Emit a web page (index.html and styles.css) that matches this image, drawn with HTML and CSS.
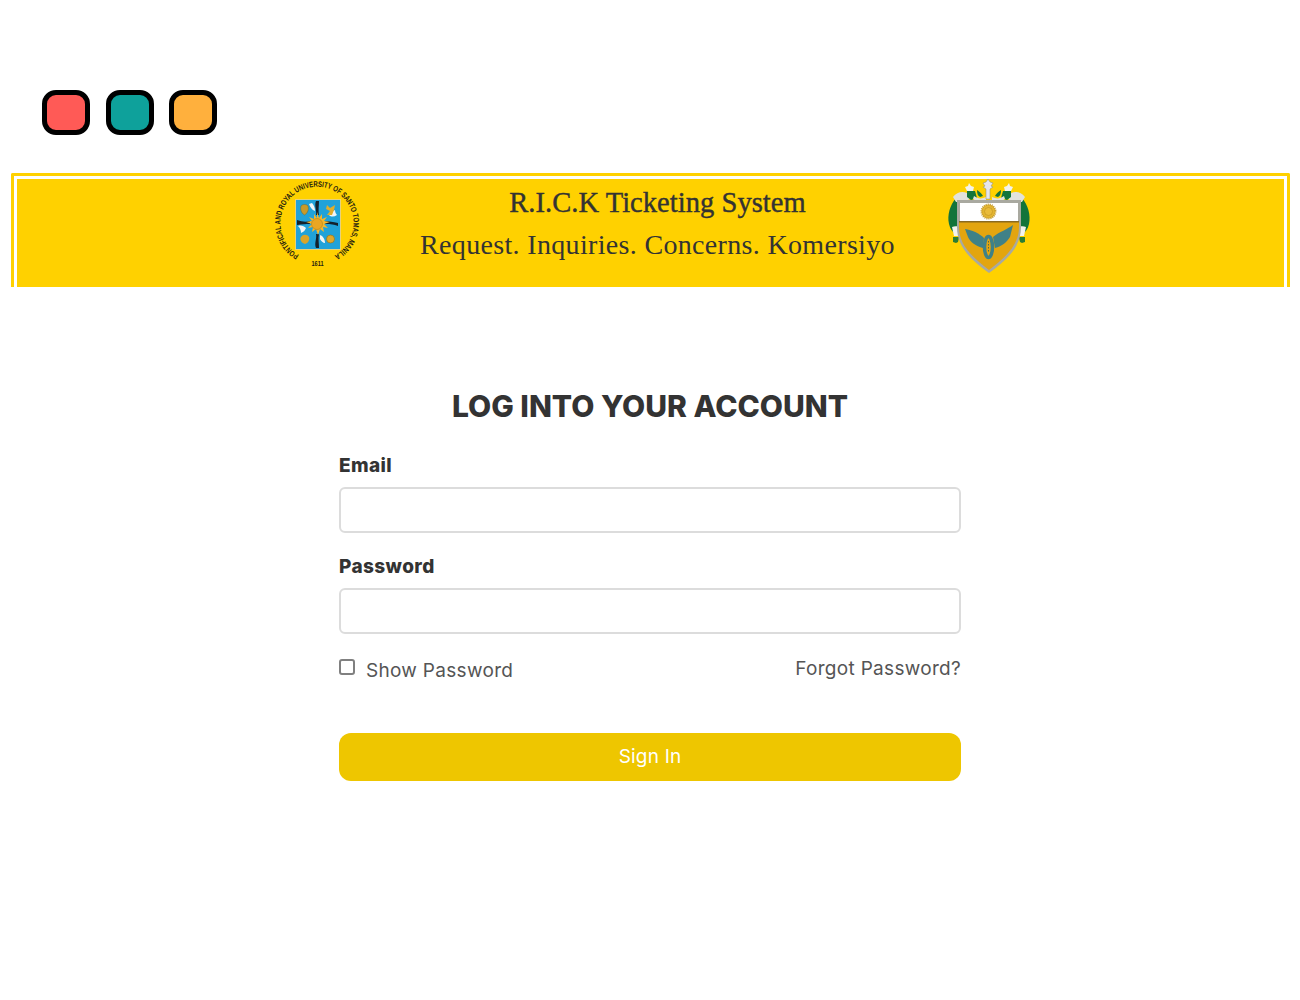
FILE: index.html
```html
<!DOCTYPE html>
<html lang="en">

<head>
    <meta charset="UTF-8">
    <meta name="viewport" content="width=device-width, initial-scale=1.0">
    <title>R.I.C.K Ticketing System</title>
    <link rel="stylesheet" href="styles.css">
</head>

<body>
    <div class="dots">
        <span class="dot red"></span>
        <span class="dot teal"></span>
        <span class="dot orange"></span>
    </div>

    <div class="banner">
        <div class="banner-inner">
            <svg class="seal" viewBox="0 0 88 90" aria-label="University seal">
                <defs>
                    <path id="ringTop" d="M25 76A36.500 36.500 0 1 1 61 76" />
                </defs>
                <text class="seal-ring"><textPath href="#ringTop" textLength="192" lengthAdjust="spacingAndGlyphs">PONTIFICAL AND ROYAL UNIVERSITY OF SANTO TOMAS, MANILA</textPath></text>
                <text class="seal-year" x="37.500" y="87" textLength="12" lengthAdjust="spacingAndGlyphs">1611</text>
                <rect x="21.500" y="20.500" width="45" height="50" fill="#20a2d9" stroke="#e8d27a" />
                <!-- cross arms -->
                <path d="M42 22c3 0 3 0 3 0 0 5-1 9 0 14h-3c1-5-2-9 0-14zM42 69h3c0-5-1-9 0-14h-3c1 5-2 9 0 14zM23 41c6 2 9 2 13 1v3c-4 0-8 0-13 1zM64 44v3c-6-2-9-2-13-2v-3c4 0 8 1 13 2z" fill="#14212c" />
                <path d="M38 24c2 2 3 5 3 8-3-1-5-4-6-7zM24 47c3-1 6 0 8 2-1 2-2 4-5 5 0-3-1-5-3-7zM63 36c-3 2-6 2-8 0 1-2 3-4 6-5 0 2 1 4 2 5zM46 56c3 1 5 4 5 8-2 0-4-2-5-4z" fill="#f1f5f6" />
                <!-- corner arms -->
                <path d="M27 27c1-2 6-2 7 0 1 3 0 7-3.500 9-3.500-2-4.500-6-3.500-9z" fill="#c89a2a" stroke="#5f6a44" stroke-width=".5" />
                <path d="M53 26l3 3 5-3-1 5-2 5h-5l3-4-4-2z" fill="#e3ad2a" />
                <path d="M27 58c2-3 6-3 8 0 1 3-1 6-4 7-3-1-6-4-4-7z" fill="#d9a52a" />
                <circle cx="56.500" cy="60" r="4" fill="#e0a82a" stroke="#8d6d1c" stroke-width=".6" />
                <!-- sun -->
                <path d="M43 33l2 6 3-4 0 5 5-2-3 4 6 1-6 2 4 4-5-1 1 5-4-3-2 6-2-6-4 3 1-5-5 1 4-4-6-2 6-1-3-4 5 2 0-5 3 4z" fill="#f3b62c" />
                <circle cx="43" cy="45" r="5.500" fill="#e9a623" stroke="#a67a1a" stroke-width=".5" />
            </svg>

            <div class="banner-text">
                <h1 class="banner-title">R.I.C.K Ticketing System</h1>
                <p class="banner-sub">Request. Inquiries. Concerns. Komersiyo</p>
            </div>

            <svg class="crest" viewBox="0 0 84 96" aria-label="Faculty crest">
                <!-- mantling -->
                <path d="M9 19C3 26 0 36 2 45c1 5 4 8 6 10l4-2V24z" fill="#12743a" />
                <path d="M75 19c6 7 9 17 7 26-1 5-4 8-6 10l-4-2V24z" fill="#12743a" />
                <path d="M6 18c4-5 9-6 14-4l3 6-6 3H9zM78 18c-4-5-9-6-14-4l-3 6 6 3h8z" fill="#e2e2dc" />
                <path d="M5 48c3-1 6-1 8 1l-2 8H7zM79 48c-3-1-6-1-8 1l2 8h4z" fill="#f3f3ee" />
                <path d="M6 58h6l-1 5-2 1-3-1zM78 58h-6l1 5 2 1 3-1z" fill="#2a7d35" />
                <!-- helm flowers -->
                <path d="M22 4l2 3 3 1-1 4h-6l-2-4 3-1zM62 4l-2 3-3 1 1 4h6l2-4-3-1z" fill="#f3f3ee" />
                <path d="M20 12h8l2 7-6 2-4-3zM64 12h-8l-2 7 6 2 4-3z" fill="#12743a" />
                <path d="M27 17c4 3 8 3 12 1v3c-4 2-9 2-13-1zM57 17c-4 3-8 3-12 1v3c4 2 9 2 13-1z" fill="#e2e2dc" />
                <path d="M30 11c3 2 5 4 6 6l-3 1c-2-1-3-3-3-7zM54 11c-3 2-5 4-6 6l3 1c2-1 3-3 3-7z" fill="#12743a" />
                <path d="M41 0l2 3 3 1-2 3 2 1-3 2v10h-4V10l-3-2 2-1-2-3 3-1z" fill="#e6e6ea" stroke="#8b8b75" stroke-width=".5" />
                <!-- shield -->
                <path d="M10 21h64v27c0 20-14 33-32 46C24 81 10 68 10 48z" fill="#a9a9a0" />
                <path d="M13 24h58v18H13z" fill="#fff" />
                <path d="M12 43h60v5c0 18-13 30-30 43C25 78 12 66 12 48z" fill="#e3a50f" />
                <path d="M12 42h60v1.500H12z" fill="#8a6a20" />
                <circle cx="41.500" cy="32.500" r="7" fill="#e4b530" stroke="#c29a30" stroke-dasharray="1 1" stroke-width="2" />
                <circle cx="41.500" cy="32.500" r="4" fill="#e9bb3a" stroke="#b58a20" stroke-width=".5" />
                <!-- winged wheel -->
                <path d="M18 50c7 1 14 4 19 9l-1 10c-7-2-13-6-15-11z" fill="#3f8187" />
                <path d="M66 46c-5 4-14 7-20 12l2 11c7-2 12-6 15-11z" fill="#3f8187" />
                <ellipse cx="41.500" cy="68" rx="4" ry="10.500" fill="none" stroke="#3f8187" stroke-width="3.500" />
                <path d="M41.500 62v12" stroke="#1f5e64" stroke-width=".8" stroke-dasharray="1.500 1.500" />
            </svg>
        </div>
    </div>

    <div class="login">
        <h2 class="login-title">LOG INTO YOUR ACCOUNT</h2>
        <form class="login-form">
            <label class="field-label" for="email">Email</label>
            <input class="field-input" type="text" id="email">

            <label class="field-label" for="password">Password</label>
            <input class="field-input" type="password" id="password">

            <div class="options">
                <label class="show-pass"><input type="checkbox" class="check"> <span class="show-text">Show Password</span></label>
                <a class="forgot" href="#">Forgot Password?</a>
            </div>

            <button class="signin" type="button">Sign In</button>
        </form>
    </div>
</body>

</html>
```

FILE: styles.css
```css
* {
    margin: 0;
    padding: 0;
    box-sizing: border-box;
}

body {
    background: #fff;
    font-family: "Inter", "Liberation Sans", sans-serif;
    color: #333;
}

.dots {
    display: flex;
    gap: 15.5px;
    padding: 90px 0 0 42px;
}

.dot {
    width: 48px;
    height: 45px;
    border: 5px solid #000;
    border-radius: 14px;
}

.red {
    background: #ff5a56;
}

.teal {
    background: #0ea19b;
}

.orange {
    background: #ffb03d;
}

.banner {
    margin: 38px 10px 0 11px;
    height: 114px;
    padding: 3px 3px 0;
    border: 3px solid #ffd100;
    border-bottom: 0;
    border-radius: 2px 2px 0 0;
}

.banner-inner {
    display: flex;
    align-items: flex-start;
    height: 100%;
    padding-left: 257px;
    background: #ffd100;
}

.seal {
    width: 88px;
    height: 90px;
    flex: none;
    overflow: visible;
}

.seal-ring {
    font-family: "Liberation Sans", sans-serif;
    font-size: 8px;
    font-weight: bold;
    fill: #1d1a10;
}

.seal-year {
    font-family: "Liberation Sans", sans-serif;
    font-size: 8px;
    font-weight: bold;
    fill: #1d1a10;
}

.banner-text {
    width: 580px;
    margin-left: 5.5px;
    text-align: center;
    font-family: "Liberation Serif", serif;
    color: #333;
}

.banner-title {
    margin-top: 6px;
    font-size: 28.5px;
    line-height: 36px;
    font-weight: normal;
    letter-spacing: 0.05px;
    -webkit-text-stroke: 0.4px #333;
}

.banner-sub {
    margin-top: 6px;
    font-size: 28px;
    line-height: 36px;
    letter-spacing: 0.33px;
}

.crest {
    width: 84px;
    height: 96px;
    flex: none;
    margin-left: -1px;
}

.login {
    width: 622px;
    margin: 0 auto;
    padding-top: 100px;
}

.login-title {
    text-align: center;
    font-size: 30px;
    line-height: 38px;
    font-weight: 800;
    color: #333;
}

.login-form {
    display: flex;
    flex-direction: column;
    padding-top: 28px;
}

.field-label {
    font-size: 19px;
    line-height: 26px;
    font-weight: 800;
    letter-spacing: 0.4px;
    color: #333;
    margin-bottom: 8px;
}

.field-input {
    height: 46px;
    margin-bottom: 21px;
    border: 2px solid #dcdcdc;
    border-radius: 6px;
    background: #fff;
}

.options {
    display: flex;
    justify-content: space-between;
    align-items: flex-start;
    padding-top: 2px;
    font-size: 19px;
    line-height: 26px;
    letter-spacing: 0.3px;
    color: #555;
}

.show-pass {
    display: flex;
    align-items: center;
    gap: 11px;
}

.show-text {
    position: relative;
    top: 1px;
}

.check {
    width: 16px;
    height: 16px;
    appearance: none;
    border: 2px solid #808080;
    border-radius: 3px;
    background: #fff;
    margin-top: -7px;
}

.forgot {
    color: #555;
    text-decoration: none;
    margin-top: -1px;
}

.signin {
    height: 48px;
    margin-top: 50px;
    padding-bottom: 2px;
    border: 0;
    border-radius: 12px;
    background: #eec600;
    color: #fff;
    font-family: inherit;
    font-size: 19px;
    letter-spacing: 0.2px;
}
```
